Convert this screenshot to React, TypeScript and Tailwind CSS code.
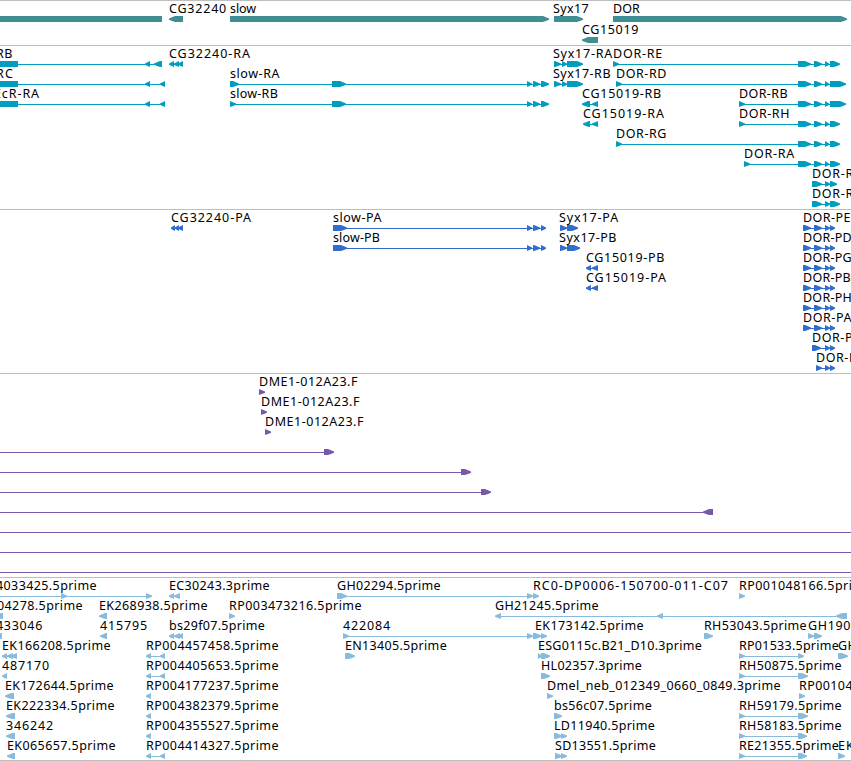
interface Feature {
  label?: string;
  x?: number;
  width?: number;
  exons: number[][];
  reverse?: boolean;
}

interface TrackProps {
  lanes: Feature[][];
  color: string;
  className: string;
}

const FONT = '12.5px "Noto Sans"';
const ctx = document.createElement("canvas").getContext("2d")!;
ctx.font = FONT;

// spreads the letters so that the label takes exactly the given width
const spacing = (label: string, width?: number) =>
  width ? (width - ctx.measureText(label).width) / label.length : 0;

const f = (
  label: string,
  x: number,
  width: number,
  exons: number[][],
  reverse = false
): Feature => ({ label, x, width, exons, reverse });

const genes: Feature[][] = [
  [
    { exons: [[-20, 162]], reverse: true },
    f("CG32240", 169, 58, [[169, 183]], true),
    f("slow", 230, 26, [[230, 549]]),
    f("Syx17", 553, 36, [[554, 583]]),
    f("DOR", 613, 27, [[613, 847]]),
  ],
  [f("CG15019", 582, 57, [[582, 598]], true)],
];

const dorShort = [[798, 811], [814, 822], [825, 829], [830, 840]];
const dorLong = [[798, 811], [814, 822], [825, 829], [830, 846]];
const slowEnd = [[332, 346], [527, 532], [533, 540], [541, 549]];

const transcripts: Feature[][] = [
  [
    f("RB", -4, 17, [[-20, 18], [145, 150], [154, 162]], true),
    f("CG32240-RA", 169, 82, [[169, 174], [174, 179], [178, 183]], true),
    f("Syx17-RA", 553, 60, [[554, 561], [562, 567], [567, 583]]),
    f("DOR-RE", 613, 50, [[613, 619], ...dorShort]),
  ],
  [
    f("RC", -4, 18, [[-20, 18], [145, 150], [160, 165]], true),
    f("slow-RA", 230, 50, [[230, 239], ...slowEnd]),
    f("Syx17-RB", 553, 58, [[554, 561], [562, 567], [567, 583]]),
    f("DOR-RD", 616, 51, [[616, 622], ...dorLong]),
  ],
  [
    f("EcR-RA", -6, 46, [[-20, 18], [145, 150], [160, 165]], true),
    f("slow-RB", 230, 48, [[230, 236], ...slowEnd]),
    f("CG15019-RB", 582, 80, [[582, 590], [592, 598]], true),
    f("DOR-RB", 739, 49, [[739, 745], ...dorLong]),
  ],
  [
    f("CG15019-RA", 583, 82, [[583, 590], [592, 598]], true),
    f("DOR-RH", 739, 51, [[739, 745], ...dorShort]),
  ],
  [f("DOR-RG", 616, 51, [[616, 622], ...dorShort])],
  [f("DOR-RA", 744, 51, [[744, 750], ...dorShort])],
  [f("DOR-R", 812, 42, [[812, 822], [825, 830], [830, 837]])],
  [f("DOR-R", 812, 42, [[812, 822], [825, 830], [830, 840]])],
];

const dorProtein = [[803, 811], [814, 822], [825, 830], [830, 835]];
const slowProtein = [[333, 347], [527, 532], [533, 540], [541, 546]];

const proteins: Feature[][] = [
  [
    f("CG32240-PA", 171, 81, [[171, 175], [175, 179], [178, 183]], true),
    f("slow-PA", 333, 49, slowProtein),
    f("Syx17-PA", 559, 60, [[560, 567], [567, 578]]),
    f("DOR-PE", 803, 48, dorProtein),
  ],
  [
    f("slow-PB", 333, 47, slowProtein),
    f("Syx17-PB", 559, 58, [[560, 567], [567, 580]]),
    f("DOR-PD", 803, 49, dorProtein),
  ],
  [
    f("CG15019-PB", 586, 79, [[586, 591], [592, 598]], true),
    f("DOR-PG", 803, 49, dorProtein),
  ],
  [
    f("CG15019-PA", 586, 81, [[586, 591], [592, 598]], true),
    f("DOR-PB", 803, 48, dorProtein),
  ],
  [f("DOR-PH", 803, 49, dorProtein)],
  [f("DOR-PA", 803, 49, dorProtein)],
  [f("DOR-P", 812, 41, [[812, 821], [825, 830], [830, 835]])],
  [f("DOR-P", 816, 41, [[816, 822], [825, 830], [830, 835]])],
];

const clones: Feature[][] = [
  [f("DME1-012A23.F", 259, 99, [[259, 265]])],
  [f("DME1-012A23.F", 261, 99, [[261, 267]])],
  [f("DME1-012A23.F", 265, 99, [[265, 271]])],
  [{ exons: [[-20, -10], [324, 334]] }],
  [{ exons: [[-20, -10], [461, 471]] }],
  [{ exons: [[-20, -10], [481, 491]] }],
  [{ exons: [[-20, -10], [703, 713]], reverse: true }],
  [{ exons: [[-20, -10], [860, 870]] }],
  [{ exons: [[-20, -10], [860, 870]] }],
  [{ exons: [[-20, -10], [860, 870]] }],
];

const ests: Feature[][] = [
  [
    f("4033425.5prime", -4, 101, [[-20, -10], [61, 67], [146, 152]]),
    f("EC30243.3prime", 169, 101, [[169, 174], [174, 180]], true),
    f("GH02294.5prime", 337, 104, [[337, 347], [527, 533]]),
    f("RC0-DP0006-150700-011-C07", 533, 196, [[533, 539]]),
    f("RP001048166.5prime", 739, 133, [[739, 745]]),
  ],
  [
    f("04278.5prime", -3, 86, [[-5, 3]], true),
    f("EK268938.5prime", 99, 109, [[99, 107]], true),
    f("RP003473216.5prime", 229, 133, [[229, 235]]),
    f("GH21245.5prime", 495, 104, [[495, 501], [657, 663], [836, 847]], true),
  ],
  [
    f("433046", -4, 47, [[-5, 2]], true),
    f("415795", 100, 48, [[100, 107]], true),
    f("bs29f07.5prime", 169, 96, [[169, 174], [174, 180], [178, 183]], true),
    f("422084", 343, 48, [[343, 349], [527, 533], [533, 541]]),
    f("EK173142.5prime", 535, 109, [[535, 541], [541, 547]]),
    f("RH53043.5prime", 704, 103, [[704, 713]]),
    f("GH190", 808, 43, [[808, 814], [814, 822]]),
  ],
  [
    f("EK166208.5prime", 2, 109, [[2, 7], [7, 13], [11, 17]], true),
    f("RP004457458.5prime", 146, 133, [[146, 151], [160, 165]], true),
    f("EN13405.5prime", 345, 102, [[345, 355]]),
    f("ESG0115c.B21_D10.3prime", 538, 164, [[538, 542], [541, 550]]),
    f("RP01533.5prime", 739, 100, [[739, 745], [798, 804]]),
    f("GH", 838, 19, [[838, 848]]),
  ],
  [
    f("487170", 2, 48, [[2, 7]], true),
    f("RP004405653.5prime", 146, 133, [[146, 151], [160, 165]], true),
    f("HL02357.3prime", 541, 101, [[541, 550]]),
    f("RH50875.5prime", 739, 103, [[739, 745], [798, 808]]),
  ],
  [
    f("EK172644.5prime", 5, 109, [[5, 14]], true),
    f("RP004177237.5prime", 146, 133, [[146, 151]], true),
    f("Dmel_neb_012349_0660_0849.3prime", 547, 234, [[547, 553]]),
    f("RP00104", 799, 54, [[799, 805]]),
  ],
  [
    f("EK222334.5prime", 6, 109, [[6, 15]], true),
    f("RP004382379.5prime", 146, 133, [[146, 151]], true),
    f("bs56c07.5prime", 554, 98, [[554, 562]]),
    f("RH59179.5prime", 739, 103, [[739, 745], [798, 808]]),
  ],
  [
    f("346242", 6, 48, [[6, 15]], true),
    f("RP004355527.5prime", 146, 133, [[146, 151]], true),
    f("LD11940.5prime", 554, 101, [[554, 562], [561, 567]]),
    f("RH58183.5prime", 739, 103, [[739, 745], [798, 807]]),
  ],
  [
    f("EK065657.5prime", 7, 109, [[7, 15]], true),
    f("RP004414327.5prime", 146, 133, [[146, 151], [160, 165]], true),
    f("SD13551.5prime", 555, 101, [[555, 562], [561, 567]]),
    f("RE21355.5prime", 739, 100, [[739, 745], [798, 807]]),
    f("EK", 838, 17, [[838, 845]]),
  ],
];

const arrow = (a: number, b: number, reverse?: boolean) => {
  const tip = reverse ? a : b;
  const base = reverse ? b : a;
  const dir = reverse ? -1 : 1;
  const head = tip - dir * Math.min(b - a, 6);
  const mid = tip - dir * Math.min(b - a, 6) * 0.4;
  return `${base},0 ${head},0 ${mid},1.4 ${tip},2.4 ${tip},3.8 ${mid},4.8 ${head},6 ${base},6`;
};

function Lane({ features }: { features: Feature[] }) {
  return (
    <div className="relative h-5 w-full">
      {features.map(
        ({ label, x, width }, i) =>
          label && (
            <span
              key={i}
              className="absolute top-0 whitespace-pre text-[12.5px] leading-4 text-black"
              style={{ left: x, letterSpacing: spacing(label, width) }}
            >
              {label}
            </span>
          )
      )}
      <svg className="absolute left-0 top-[15px]" width="851" height="6">
        {features.map(({ exons, reverse }, i) => {
          const start = exons[0][0];
          const end = exons[exons.length - 1][1];
          return (
            <g key={i} fill="currentColor">
              {exons.length > 1 && (
                <rect x={start + 1} y="3" width={end - start - 2} height="1" />
              )}
              {exons.map(([a, b], j) => (
                <polygon key={j} points={arrow(a, b, reverse)} />
              ))}
            </g>
          );
        })}
      </svg>
    </div>
  );
}

function Track({ lanes, color, className }: TrackProps) {
  return (
    <section
      className={`flex flex-col overflow-hidden border-t border-[#bebebe] ${color} ${className}`}
    >
      {lanes.map((features, i) => (
        <Lane key={i} features={features} />
      ))}
    </section>
  );
}

function App() {
  return (
    <main className="h-[761px] w-[851px] overflow-hidden bg-white font-['Noto_Sans',sans-serif]">
      <Track lanes={genes} color="text-[#3e8e93]" className="h-[45px] gap-px" />
      <Track lanes={transcripts} color="text-[#009dbf]" className="h-[164px]" />
      <Track lanes={proteins} color="text-[#316dce]" className="h-[164px]" />
      <Track lanes={clones} color="text-[#7858a8]" className="h-[204px]" />
      <Track
        lanes={ests}
        color="text-[#88bbdd]"
        className="h-[184px] border-b"
      />
    </main>
  );
}

export default App;
